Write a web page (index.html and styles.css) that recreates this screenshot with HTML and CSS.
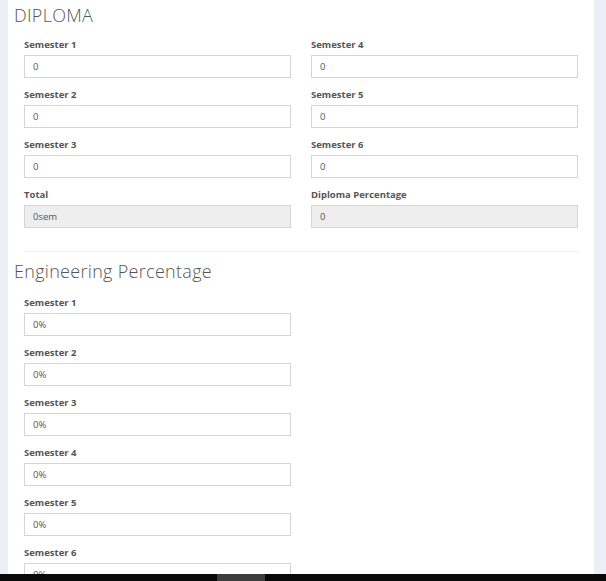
FILE: index.html
```html
<!DOCTYPE html>
<html>
<head>
<meta charset="utf-8">
<link rel="stylesheet" href="styles.css">
</head>
<body>
<div class="panel">
  <h4 class="title">DIPLOMA</h4>
  <div class="grid">
    <div class="field"><label>Semester 1</label><div class="input">0</div></div>
    <div class="field"><label>Semester 4</label><div class="input">0</div></div>
    <div class="field"><label>Semester 2</label><div class="input">0</div></div>
    <div class="field"><label>Semester 5</label><div class="input">0</div></div>
    <div class="field"><label>Semester 3</label><div class="input">0</div></div>
    <div class="field"><label>Semester 6</label><div class="input">0</div></div>
    <div class="field"><label>Total</label><div class="input readonly">0sem</div></div>
    <div class="field"><label>Diploma Percentage</label><div class="input readonly">0</div></div>
  </div>
  <div class="divider"></div>
  <h4 class="title title-2">Engineering Percentage</h4>
  <div class="grid">
    <div class="field"><label>Semester 1</label><div class="input">0%</div></div>
    <div class="field empty"></div>
    <div class="field"><label>Semester 2</label><div class="input">0%</div></div>
    <div class="field empty"></div>
    <div class="field"><label>Semester 3</label><div class="input">0%</div></div>
    <div class="field empty"></div>
    <div class="field"><label>Semester 4</label><div class="input">0%</div></div>
    <div class="field empty"></div>
    <div class="field"><label>Semester 5</label><div class="input">0%</div></div>
    <div class="field empty"></div>
    <div class="field"><label>Semester 6</label><div class="input">0%</div></div>
    <div class="field empty"></div>
  </div>
</div>
<div class="hscroll"><div class="thumb"></div></div>
</body>
</html>
```

FILE: styles.css
```css
html, body {
  margin: 0;
  padding: 0;
}
body {
  background: #eceff5;
  font-family: "Open Sans", "Liberation Sans", sans-serif;
  height: 581px;
  overflow: hidden;
}
.panel {
  margin-left: 8px;
  width: 586px;
  box-sizing: border-box;
  background: #fff;
  padding: 3px 16px 40px 6px;
  min-height: 700px;
}
.title {
  margin: 0;
  font-size: 18px;
  line-height: 24px;
  font-weight: 300;
  letter-spacing: 0.3px;
  color: #555;
}
.grid {
  margin-top: 11px;
  margin-left: 10px;
  display: grid;
  grid-template-columns: 267px 267px;
  column-gap: 20px;
  row-gap: 10px;
}
.field label {
  display: block;
  font-size: 9.5px;
  line-height: 14px;
  font-weight: 700;
  color: #555;
  margin-bottom: 3px;
}
.input {
  height: 23px;
  box-sizing: border-box;
  border: 1px solid #d3d4dc;
  background: #fff;
  padding: 0 8px;
  font-size: 9.5px;
  line-height: 21px;
  color: #555;
}
.input.readonly {
  background: #eee;
}
.divider {
  margin: 23px 0 0 10px;
  height: 1px;
  background: #eeeeee;
}
.title-2 {
  margin-top: 7px;
}
.title-2 + .grid {
  margin-top: 13px;
}
.hscroll {
  position: fixed;
  left: 0;
  right: 0;
  bottom: 0;
  height: 7px;
  background: #0a0a0a;
}
.thumb {
  position: absolute;
  left: 217px;
  width: 48px;
  top: 0;
  bottom: 0;
  background: #3d3d3d;
}
```
